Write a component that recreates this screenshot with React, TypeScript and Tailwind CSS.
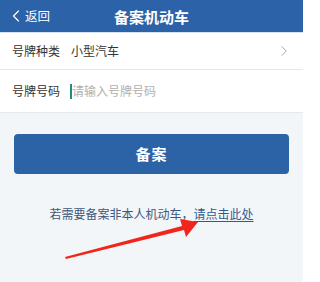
import {ChevronLeft, ChevronRight} from 'lucide-react'

const font = {fontFamily: '"Noto Sans CJK SC", "Noto Sans", sans-serif'}

export default function App() {
  return (
    <div className="relative flex min-h-[282px] w-full bg-white" style={font}>
      <div className="flex min-h-[282px] w-[303px] flex-col bg-[#f3f6f9]">
        {/* header */}
        <header className="relative flex h-[33px] items-center justify-center border-b border-[#d6e2f0] bg-[#2c62a8]">
          <div className="absolute left-[6px] top-0 flex h-full items-center text-white">
            <ChevronLeft className="size-[20px]" strokeWidth={1.4} />
            <span className="ml-[-1px] text-[12.5px] leading-none">返回</span>
          </div>
          <h1 className="text-[15px] font-bold leading-none text-white">
            备案机动车
          </h1>
        </header>

        {/* form rows */}
        <div className="flex flex-col bg-white">
          <div className="flex h-[37px] items-center border-b border-[#e6e8eb] pl-[12px] pr-[10px]">
            <span className="w-[59px] text-[12px] text-[#333]">号牌种类</span>
            <span className="flex-1 text-[12px] text-[#333]">小型汽车</span>
            <ChevronRight
              className="size-[18px] text-[#a8a8a8]"
              strokeWidth={1.3}
            />
          </div>
          <div className="flex h-[43px] items-center border-b border-[#e6e8eb] pl-[12px] pr-[10px]">
            <span className="w-[58px] text-[12px] text-[#333]">号牌号码</span>
            <span className="h-[15px] w-[2px] bg-[#1f8f7a]" />
            <span className="text-[12px] text-[#b0b0b0]">请输入号牌号码</span>
          </div>
        </div>

        {/* action */}
        <div className="flex flex-col px-[14px] pt-[21px]">
          <button className="flex h-[40px] items-center justify-center rounded-[4px] bg-[#2c62a6] text-[15px] font-bold tracking-[1px] text-white">
            备案
          </button>
          <p className="mt-[32px] text-center text-[12px] leading-[16px] text-[#3e5878]">
            若需要备案非本人机动车，
            <span className="text-[#2d5a92] underline underline-offset-2">
              请点击此处
            </span>
          </p>
        </div>
      </div>

      {/* red annotation arrow */}
      <svg
        className="absolute left-0 top-0"
        width="307"
        height="282"
        viewBox="0 0 307 282">
        <polygon
          points="65,257 182,226 180,219 198,222 186,237 184,230 66,259"
          fill="#f0261c"
        />
      </svg>
    </div>
  )
}
